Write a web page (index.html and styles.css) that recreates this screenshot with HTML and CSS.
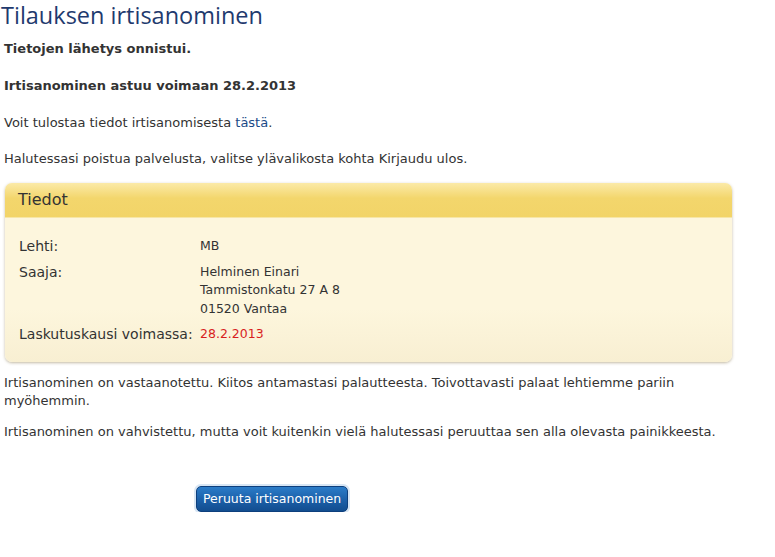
FILE: index.html
```html
<!DOCTYPE html>
<html lang="fi">
<head>
<meta charset="UTF-8">
<title>Tilauksen irtisanominen</title>
<link rel="stylesheet" href="styles.css">
</head>
<body>
    <div class="page">
        <h1>Tilauksen irtisanominen</h1>
        <p class="strong">Tietojen lähetys onnistui.</p>
        <p class="strong">Irtisanominen astuu voimaan 28.2.2013</p>
        <p>Voit tulostaa tiedot irtisanomisesta <a href="#">tästä</a>.</p>
        <p class="last">Halutessasi poistua palvelusta, valitse ylävalikosta kohta Kirjaudu ulos.</p>

        <div class="box">
            <div class="box-header">Tiedot</div>
            <div class="box-body">
                <div class="row">
                    <div class="label">Lehti:</div>
                    <div class="value">MB</div>
                </div>
                <div class="row">
                    <div class="label">Saaja:</div>
                    <div class="value">Helminen Einari<br>Tammistonkatu 27 A 8<br>01520 Vantaa</div>
                </div>
                <div class="row">
                    <div class="label">Laskutuskausi voimassa:</div>
                    <div class="value date">28.2.2013</div>
                </div>
            </div>
        </div>

        <p class="after">Irtisanominen on vastaanotettu. Kiitos antamastasi palautteesta. Toivottavasti palaat lehtiemme pariin myöhemmin.</p>
        <p class="after">Irtisanominen on vahvistettu, mutta voit kuitenkin vielä halutessasi peruuttaa sen alla olevasta painikkeesta.</p>

        <div class="actions">
            <button type="button" class="cancel">Peruuta irtisanominen</button>
        </div>
    </div>
</body>
</html>
```

FILE: styles.css
```css
/* Global styles */
body {
    margin: 0;
    font-family: "DejaVu Sans", Verdana, sans-serif;
    font-size: 13px;
    color: #333;
    background-color: #fff;
}
.page {
    width: 728px;
    padding: 0 0 0 4px;
}
h1 {
    margin: 0 0 0 -3px;
    font-family: "Open Sans", sans-serif;
    font-weight: 400;
    font-size: 23.5px;
    line-height: 30px;
    color: #1f3a6e;
}
p {
    margin: 0 0 19px;
    line-height: 18px;
}
p.strong {
    font-weight: bold;
    margin-top: 10px;
}
p.strong + p.strong {
    margin-top: 0;
}
p.last {
    margin-top: -1px;
    margin-bottom: 15px;
}
p.after {
    margin: 12px 0 13px;
}
a {
    color: #1b4a87;
    text-decoration: none;
}

/* Info box */
.box {
    margin: 0 0 0 1px;
    background: linear-gradient(#fdf6dd 70%, #f8efd2);
    border-radius: 7px;
    box-shadow: 0 1px 3px rgba(120, 100, 50, 0.45);
    overflow: hidden;
}
.box-header {
    height: 34px;
    line-height: 34px;
    padding-left: 13px;
    font-size: 16px;
    color: #333;
    background: linear-gradient(#fbeaa8, #f3d66c 45%, #f2d468);
    border-bottom: 1px solid #f7e6a6;
}
.box-body {
    padding: 19px 14px 11px;
}
.row {
    display: flex;
    line-height: 18.5px;
    margin-bottom: 7px;
}
.label {
    width: 181px;
    font-size: 14px;
}
.value {
    font-size: 12.5px;
}
.value.date {
    color: #d81e1e;
}

/* Button */
.actions {
    padding: 32px 0 0 192px;
}
.cancel {
    cursor: pointer;
    padding: 4px 6px 5px;
    font-family: "DejaVu Sans", Verdana, sans-serif;
    font-size: 12.5px;
    color: #fff;
    border: 1px solid #0d3f7d;
    border-radius: 5px;
    background: linear-gradient(#2b7cc8, #1b5fa8 55%, #124d8f);
    box-shadow: 0 0 0 2px #d8e6f4;
}
```
